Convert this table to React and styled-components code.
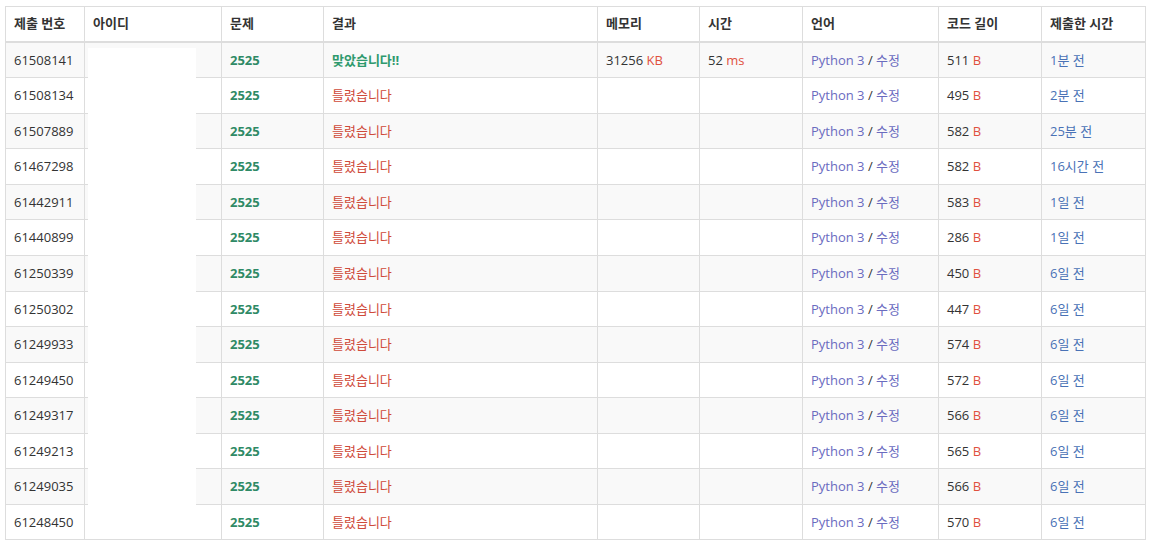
import styled, { createGlobalStyle } from "styled-components";

const GlobalStyle = createGlobalStyle`
  body {
    margin: 0;
    background: #fff;
    font-family: "Open Sans", "Noto Sans CJK KR", sans-serif;
    font-size: 13px;
    color: #333;
  }
`;

const columns = [
  { title: "제출 번호", width: 79 },
  { title: "아이디", width: 137 },
  { title: "문제", width: 102 },
  { title: "결과", width: 274 },
  { title: "메모리", width: 102 },
  { title: "시간", width: 103 },
  { title: "언어", width: 136 },
  { title: "코드 길이", width: 103 },
  { title: "제출한 시간", width: 104 },
];

const rows = [
  { id: 61508141, ac: true, memory: 31256, time: 52, len: 511, ago: "1분 전" },
  { id: 61508134, len: 495, ago: "2분 전" },
  { id: 61507889, len: 582, ago: "25분 전" },
  { id: 61467298, len: 582, ago: "16시간 전" },
  { id: 61442911, len: 583, ago: "1일 전" },
  { id: 61440899, len: 286, ago: "1일 전" },
  { id: 61250339, len: 450, ago: "6일 전" },
  { id: 61250302, len: 447, ago: "6일 전" },
  { id: 61249933, len: 574, ago: "6일 전" },
  { id: 61249450, len: 572, ago: "6일 전" },
  { id: 61249317, len: 566, ago: "6일 전" },
  { id: 61249213, len: 565, ago: "6일 전" },
  { id: 61249035, len: 566, ago: "6일 전" },
  { id: 61248450, len: 570, ago: "6일 전" },
];

const App = () => {
  return (
    <Page>
      <GlobalStyle />
      <TableWrap>
        <StatusTable>
          <colgroup>
            {columns.map((c) => (
              <col key={c.title} style={{ width: c.width }} />
            ))}
          </colgroup>
          <thead>
            <tr>
              {columns.map((c) => (
                <th key={c.title}>{c.title}</th>
              ))}
            </tr>
          </thead>
          <tbody>
            {rows.map((r) => (
              <tr key={r.id}>
                <td>{r.id}</td>
                <td></td>
                <td>
                  <ProblemLink>2525</ProblemLink>
                </td>
                <td>
                  <Result $ac={r.ac}>{r.ac ? "맞았습니다!!" : "틀렸습니다"}</Result>
                </td>
                <td>
                  {r.memory && (
                    <>
                      {r.memory} <Unit>KB</Unit>
                    </>
                  )}
                </td>
                <td>
                  {r.time && (
                    <>
                      {r.time} <Unit>ms</Unit>
                    </>
                  )}
                </td>
                <td>
                  <LangLink>Python 3</LangLink> / <LangLink>수정</LangLink>
                </td>
                <td>
                  {r.len} <Unit>B</Unit>
                </td>
                <td>
                  <TimeLink>{r.ago}</TimeLink>
                </td>
              </tr>
            ))}
          </tbody>
        </StatusTable>
        <Redaction />
      </TableWrap>
    </Page>
  );
};

const Page = styled.div`
  padding: 6px 0 0 5px;
`;

const TableWrap = styled.div`
  position: relative;
  width: 1140px;
`;

const StatusTable = styled.table`
  width: 1140px;
  table-layout: fixed;
  border-collapse: collapse;
  border: 1px solid #ddd;

  th,
  td {
    padding: 8px;
    line-height: 1.42857;
    text-align: left;
    white-space: nowrap;
    border: 1px solid #ddd;
  }

  th {
    padding-top: 7px;
    font-weight: bold;
    color: #333;
    border-bottom: 2px solid #ddd;
    vertical-align: bottom;
  }

  tbody tr:nth-child(odd) {
    background: #f9f9f9;
  }
`;

const ProblemLink = styled.span`
  color: #2f8a66;
  font-weight: bold;
`;

const Result = styled.span`
  color: ${(p) => (p.$ac ? "#2f9a6e" : "#cf4a3a")};
  font-weight: ${(p) => (p.$ac ? "bold" : "normal")};
`;

const Unit = styled.span`
  color: #e0503e;
`;

const LangLink = styled.span`
  color: #6a6bbf;
`;

const TimeLink = styled.span`
  color: #4a72b6;
`;

const Redaction = styled.div`
  position: absolute;
  left: 83px;
  top: 42px;
  width: 108px;
  height: 491px;
  background: #fff;
`;

export default App;
